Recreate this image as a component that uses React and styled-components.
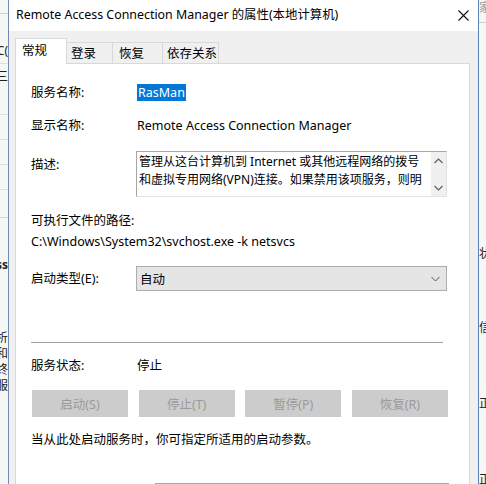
import React from 'react';
import styled, { createGlobalStyle } from 'styled-components';

const Global = createGlobalStyle`
  html, body { margin: 0; padding: 0; background: #f4f4f4; }
  body {
    width: 486px; height: 484px; overflow: hidden;
    font-family: "Noto Sans", "Noto Sans CJK SC", sans-serif;
    color: #000;
  }
`;

const FONT = `"Noto Sans", "Noto Sans CJK SC", sans-serif`;
const FS = '12.5px';

const Screen = styled.div`
  display: flex;
  width: 486px;
  height: 484px;
  overflow: hidden;
`;

const Strip = styled.div`
  flex: none;
  width: ${p => p.$w}px;
  height: 484px;
  overflow: hidden;
  background: ${p => p.$bg};
  display: flex;
  flex-direction: column;
  align-items: ${p => p.$align};
`;

const Frag = styled.div`
  flex: none;
  margin-top: ${p => p.$mt}px;
  height: 15px;
  line-height: 15px;
  font-size: 12px;
  font-weight: ${p => (p.$bold ? 700 : 400)};
  color: ${p => p.$color || '#222'};
  white-space: nowrap;
`;

const FragLine = styled.div`
  flex: none;
  align-self: stretch;
  margin-top: ${p => p.$mt}px;
  height: 1px;
  background: ${p => p.$color || '#cfcfcf'};
`;

const Dialog = styled.div`
  flex: none;
  width: 469px;
  height: 520px;
  border-left: 1px solid #6f8db3;
  border-right: 1px solid #5a82b4;
  background: #f0f0f0;
  display: flex;
  flex-direction: column;
  font-family: ${FONT};
`;

const TitleBar = styled.div`
  flex: none;
  height: 31px;
  background: #fff;
  display: flex;
  align-items: center;
  justify-content: space-between;
  padding: 0 9px 0 7px;
`;

const TitleText = styled.div`
  font-size: 12.4px;
  line-height: 16px;
  white-space: nowrap;
  margin-top: -1px;
`;

const CloseIcon = styled.svg`
  flex: none;
  width: 11px;
  height: 11px;
  margin-top: -1px;
`;

const Body = styled.div`
  flex: 1;
  display: flex;
  flex-direction: column;
  padding: 7px 8px 0 6px;
`;

const TabBar = styled.div`
  flex: none;
  height: 25px;
  display: flex;
  align-items: flex-end;
  position: relative;
  z-index: 1;
`;

const Tab = styled.div`
  flex: none;
  box-sizing: border-box;
  width: ${p => p.$w}px;
  height: ${p => (p.$active ? 26 : 21)}px;
  align-self: ${p => (p.$active ? 'flex-start' : 'flex-end')};
  padding-left: ${p => p.$pl}px;
  padding-top: ${p => (p.$active ? 4 : 3)}px;
  background: ${p => (p.$active ? '#fff' : '#f0f0f0')};
  border-top: 1px solid #d9d9d9;
  border-right: 1px solid #d9d9d9;
  border-left: ${p => (p.$active ? '1px solid #d9d9d9' : 'none')};
  font-size: ${FS};
  line-height: 16px;
  white-space: nowrap;
`;

const Panel = styled.div`
  flex: 1;
  background: #fff;
  border: 1px solid #d9d9d9;
  display: flex;
  flex-direction: column;
  padding: 20px 21px 0 15px;
`;

const Row = styled.div`
  flex: none;
  display: grid;
  grid-template-columns: 105px 1fr;
  align-items: ${p => (p.$top ? 'start' : 'center')};
  margin-top: ${p => p.$mt}px;
`;

const Label = styled.div`
  font-size: ${FS};
  line-height: 18px;
  white-space: nowrap;
  margin-top: ${p => p.$mt || 0}px;
`;

const Value = styled.div`
  font-size: ${FS};
  line-height: 18px;
  padding-left: 1px;
  white-space: nowrap;
`;

const Selected = styled.span`
  display: inline-block;
  background: #0078d7;
  color: #fff;
  line-height: 17px;
  padding: 0 1px;
`;

const TextLine = styled.div`
  flex: none;
  margin-top: ${p => p.$mt}px;
  font-size: ${FS};
  line-height: 18px;
  white-space: nowrap;
`;

const DescBox = styled.div`
  box-sizing: border-box;
  width: 311px;
  height: 46px;
  border: 1px solid #e2e2e2;
  border-top-color: #a6a6a6;
  border-left-color: #a6a6a6;
  display: flex;
  background: #fff;
`;

const DescText = styled.div`
  flex: 1;
  overflow: hidden;
  padding: 1px 0 0 2px;
  font-size: 12px;
  line-height: 18px;
  white-space: nowrap;
`;

const ScrollBar = styled.div`
  flex: none;
  width: 15px;
  background: #f0f0f0;
  display: flex;
  flex-direction: column;
  justify-content: space-between;
`;

const ArrowBox = styled.div`
  height: 17px;
  display: flex;
  align-items: center;
  justify-content: center;
`;

const Select = styled.div`
  box-sizing: border-box;
  width: 311px;
  height: 25px;
  border: 1px solid #adadad;
  background: #e5e5e5;
  display: flex;
  align-items: center;
  justify-content: space-between;
  padding: 0 6px 0 3px;
  font-size: ${FS};
`;

const Separator = styled.div`
  flex: none;
  height: 1px;
  background: #a0a0a0;
  margin: ${p => p.$mt}px 5px 0 0;
`;

const ButtonRow = styled.div`
  flex: none;
  display: flex;
  justify-content: space-between;
  margin: 15px 0 0 1px;
`;

const Button = styled.div`
  box-sizing: border-box;
  width: 96px;
  height: 27px;
  background: #cccccc;
  border: 1px solid #cccccc;
  color: #9a9a9a;
  font-size: ${FS};
  display: flex;
  align-items: center;
  justify-content: center;
`;

const ParamInput = styled.div`
  flex: none;
  box-sizing: border-box;
  margin: 34px 0 0 124px;
  width: 294px;
  height: 23px;
  border: 1px solid #a6a6a6;
  background: #fff;
`;

const Chevron = ({ up }) => (
  <svg width="9" height="6" viewBox="0 0 9 6">
    <path
      d={up ? 'M0.5 5 L4.5 1 L8.5 5' : 'M0.5 1 L4.5 5 L8.5 1'}
      fill="none"
      stroke="#606060"
      strokeWidth="1.2"
    />
  </svg>
);

export default function App() {
  return (
    <>
      <Global />
      <Screen>
        <Strip $w={8} $bg="#f6f6f6" $align="flex-end">
          <FragLine $mt={13} />
          <Frag $mt={29}>接C(</Frag>
          <FragLine $mt={5} $color="#e0e0e0" />
          <Frag $mt={5}>三三</Frag>
          <FragLine $mt={30} $color="#e0e0e0" />
          <FragLine $mt={24} $color="#e0e0e0" />
          <FragLine $mt={24} $color="#e0e0e0" />
          <FragLine $mt={24} $color="#e0e0e0" />
          <FragLine $mt={27} $color="#c9d7e8" />
          <Frag $mt={39} $bold>ss</Frag>
          <Frag $mt={58}>分析</Frag>
          <Frag $mt={1}>用和</Frag>
          <Frag $mt={1}>始终</Frag>
          <Frag $mt={1}>务服</Frag>
        </Strip>
        <Dialog>
          <TitleBar>
            <TitleText>Remote Access Connection Manager 的属性(本地计算机)</TitleText>
            <CloseIcon viewBox="0 0 11 11">
              <path d="M0.5 0.5 L10.5 10.5 M10.5 0.5 L0.5 10.5" stroke="#111" strokeWidth="1.1" />
            </CloseIcon>
          </TitleBar>
          <Body>
            <TabBar>
              <Tab $active $w={52} $pl={6}>常规</Tab>
              <Tab $w={46} $pl={4}>登录</Tab>
              <Tab $w={50} $pl={6}>恢复</Tab>
              <Tab $w={56} $pl={4}>依存关系</Tab>
            </TabBar>
            <Panel>
              <Row $mt={0}>
                <Label>服务名称:</Label>
                <Value><Selected>RasMan</Selected></Value>
              </Row>
              <Row $mt={15}>
                <Label>显示名称:</Label>
                <Value>Remote Access Connection Manager</Value>
              </Row>
              <Row $mt={16} $top>
                <Label $mt={5}>描述:</Label>
                <DescBox>
                  <DescText>
                    <div>管理从这台计算机到 Internet 或其他远程网络的拨号</div>
                    <div>和虚拟专用网络(VPN)连接。如果禁用该项服务，则明</div>
                  </DescText>
                  <ScrollBar>
                    <ArrowBox><Chevron up /></ArrowBox>
                    <ArrowBox><Chevron /></ArrowBox>
                  </ScrollBar>
                </DescBox>
              </Row>
              <TextLine $mt={15}>可执行文件的路径:</TextLine>
              <TextLine $mt={3}>C:\Windows\System32\svchost.exe -k netsvcs</TextLine>
              <Row $mt={15}>
                <Label>启动类型(E):</Label>
                <Select>
                  <span>自动</span>
                  <svg width="9" height="6" viewBox="0 0 9 6">
                    <path d="M0.5 1 L4.5 5 L8.5 1" fill="none" stroke="#555" strokeWidth="1" />
                  </svg>
                </Select>
              </Row>
              <Separator $mt={51} />
              <Row $mt={14}>
                <Label>服务状态:</Label>
                <Value>停止</Value>
              </Row>
              <ButtonRow>
                <Button>启动(S)</Button>
                <Button>停止(T)</Button>
                <Button>暂停(P)</Button>
                <Button>恢复(R)</Button>
              </ButtonRow>
              <TextLine $mt={14}>当从此处启动服务时，你可指定所适用的启动参数。</TextLine>
              <ParamInput />
            </Panel>
          </Body>
        </Dialog>
        <Strip $w={7} $bg="#f7f7f7" $align="flex-start">
          <Frag $mt={0} $color="#9a9a9a">家</Frag>
          <FragLine $mt={7} />
          <Frag $mt={223}>状态</Frag>
          <Frag $mt={59}>信息</Frag>
          <Frag $mt={61}>正在</Frag>
          <Frag $mt={61}>正在</Frag>
        </Strip>
      </Screen>
    </>
  );
}
